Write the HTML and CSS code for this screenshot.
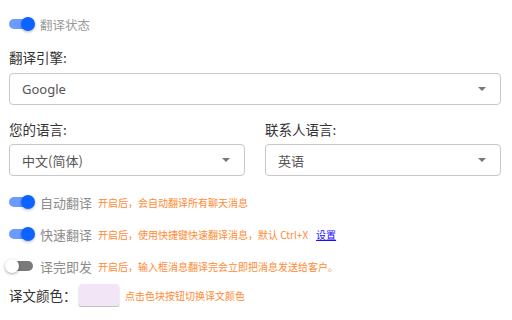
FILE: index.html
```html
<!DOCTYPE html>
<html lang="zh-CN">
<head>
<meta charset="utf-8">
<link rel="stylesheet" href="styles.css">
</head>
<body>
<div class="page">
  <div class="switch-row status">
    <span class="switch on"><span class="track"></span><span class="thumb"></span></span>
    <span class="switch-label">翻译状态</span>
  </div>

  <div class="field-label first">翻译引擎:</div>
  <div class="select"><span class="value latin">Google</span><span class="arrow"></span></div>

  <div class="cols">
    <div class="col">
      <div class="field-label">您的语言:</div>
      <div class="select"><span class="value">中文(简体)</span><span class="arrow"></span></div>
    </div>
    <div class="col">
      <div class="field-label">联系人语言:</div>
      <div class="select"><span class="value">英语</span><span class="arrow"></span></div>
    </div>
  </div>

  <div class="options">
    <div class="switch-row">
      <span class="switch on"><span class="track"></span><span class="thumb"></span></span>
      <span class="switch-label">自动翻译</span>
      <span class="hint">开启后，会自动翻译所有聊天消息</span>
    </div>
    <div class="switch-row">
      <span class="switch on"><span class="track"></span><span class="thumb"></span></span>
      <span class="switch-label">快速翻译</span>
      <span class="hint">开启后，使用快捷键快速翻译消息，默认 Ctrl+X</span>
      <a class="link" href="#">设置</a>
    </div>
    <div class="switch-row">
      <span class="switch off"><span class="track"></span><span class="thumb"></span></span>
      <span class="switch-label">译完即发</span>
      <span class="hint">开启后，输入框消息翻译完会立即把消息发送给客户。</span>
    </div>
    <div class="color-row">
      <span class="color-label">译文颜色：</span>
      <span class="swatch"></span>
      <span class="hint">点击色块按钮切换译文颜色</span>
    </div>
  </div>
</div>
</body>
</html>
```
FILE: styles.css
```css
* { box-sizing: border-box; }
html, body { margin: 0; padding: 0; background: #fff; }
body {
  font-family: "Noto Sans CJK SC", "Noto Sans", sans-serif;
  color: #333;
  font-size: 13px;
}
.page { padding: 13px 11px 0 9px; }

.switch-row { display: flex; align-items: center; height: 22px; }
.switch { position: relative; width: 31px; height: 22px; flex: none; }
.switch .track {
  position: absolute; left: 0; top: 6px; width: 24px; height: 10px;
  border-radius: 5px; background: #6b9bff;
}
.switch .thumb {
  position: absolute; top: 4px; left: 12px; width: 14px; height: 14px;
  border-radius: 50%; background: #0d63ff;
  box-shadow: 0 1px 3px rgba(0,0,0,.3);
}
.switch.off .track { background: #7a7a7a; left: 3px; width: 21px; }
.switch.off .thumb { left: -4px; background: #fff; box-shadow: 0 1px 3px rgba(0,0,0,.35); }
.switch-label { color: #8c8c8c; font-size: 13px; }
.status .switch-label { font-size: 12.5px; color: #9a9a9a; }

.hint { color: #ff8a33; font-size: 10px; margin-left: 6px; }
.link { color: #1a0dff; font-size: 10px; margin-left: 8px; text-decoration: underline; }

.field-label { font-size: 13.5px; line-height: 20px; color: #333; margin: 14px 0 5px; }
.field-label.first { margin-top: 12px; margin-bottom: 6px; }

.select {
  height: 32px; border: 1px solid #c8c8c8; border-radius: 4px;
  display: flex; align-items: center; justify-content: space-between;
  padding: 0 14px 0 12px;
}
.select .value { color: #555; font-size: 13px; }
.select .value.latin { font-family: "Noto Sans", "Noto Sans CJK SC", sans-serif; }
.arrow {
  width: 0; height: 0;
  border-left: 4px solid transparent; border-right: 4px solid transparent;
  border-top: 4px solid #777;
}

.cols { display: grid; grid-template-columns: 1fr 1fr; gap: 20px; }

.options { margin-top: 15px; display: flex; flex-direction: column; gap: 10px; }
.color-row { display: flex; align-items: center; height: 24px; margin-top: -4px; }
.color-label { font-size: 13.5px; color: #333; width: 70px; }
.swatch {
  width: 40px; height: 22px; border-radius: 3px; background: #f2e6f6;
  box-shadow: 0 2px 2px rgba(0,0,0,.25);
}
```
